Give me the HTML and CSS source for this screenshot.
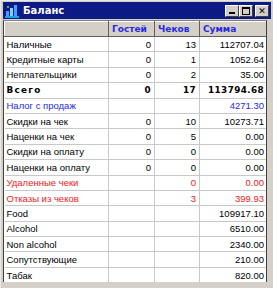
FILE: index.html
```html
<!DOCTYPE html>
<html lang="ru">
<head>
  <meta charset="UTF-8">
  <title>Баланс</title>
  <link rel="stylesheet" href="styles.css">
</head>
<body>
  <div class="window">
    <div class="titlebar">
      <svg class="app-icon" width="14" height="14" viewBox="0 0 14 14">
        <rect x="0" y="0" width="14" height="14" fill="#0c1a86"/>
        <rect x="1" y="7" width="3" height="6" fill="#3fa0ff"/>
        <rect x="5" y="4" width="3" height="9" fill="#7fd0ff"/>
        <rect x="9" y="1" width="3" height="12" fill="#3fa0ff"/>
        <rect x="2" y="2" width="2" height="2" fill="#40c040"/>
        <rect x="0" y="12" width="14" height="2" fill="#20a0e0"/>
      </svg>
      <span class="title">Баланс</span>
      <div class="buttons">
        <span class="btn"><i class="min"></i></span>
        <span class="btn"><i class="max"></i></span>
        <span class="btn close">&#x2715;</span>
      </div>
    </div>
    <div class="grid-frame">
      <table class="grid">
        <colgroup>
          <col class="c-name"><col class="c-guests"><col class="c-checks"><col class="c-sum">
        </colgroup>
        <thead>
          <tr><th></th><th>Гостей</th><th>Чеков</th><th>Сумма</th></tr>
        </thead>
        <tbody>
          <tr><td>Наличные</td><td>0</td><td>13</td><td>112707.04</td></tr>
          <tr><td>Кредитные карты</td><td>0</td><td>1</td><td>1052.64</td></tr>
          <tr><td>Неплательщики</td><td>0</td><td>2</td><td>35.00</td></tr>
          <tr class="total"><td>Всего</td><td>0</td><td>17</td><td>113794.68</td></tr>
          <tr class="blue"><td>Налог с продаж</td><td></td><td></td><td>4271.30</td></tr>
          <tr><td>Скидки на чек</td><td>0</td><td>10</td><td>10273.71</td></tr>
          <tr><td>Наценки на чек</td><td>0</td><td>5</td><td>0.00</td></tr>
          <tr><td>Скидки на оплату</td><td>0</td><td>0</td><td>0.00</td></tr>
          <tr><td>Наценки на оплату</td><td>0</td><td>0</td><td>0.00</td></tr>
          <tr class="red"><td>Удаленные чеки</td><td></td><td>0</td><td>0.00</td></tr>
          <tr class="red"><td>Отказы из чеков</td><td></td><td>3</td><td>399.93</td></tr>
          <tr><td>Food</td><td></td><td></td><td>109917.10</td></tr>
          <tr><td>Alcohol</td><td></td><td></td><td>6510.00</td></tr>
          <tr><td>Non alcohol</td><td></td><td></td><td>2340.00</td></tr>
          <tr><td>Сопутствующие</td><td></td><td></td><td>210.00</td></tr>
          <tr><td>Табак</td><td></td><td></td><td>820.00</td></tr>
        </tbody>
      </table>
    </div>
  </div>
</body>
</html>
```

FILE: styles.css
```css
body {
  margin: 0;
  font-family: "Liberation Sans", Arial, sans-serif;
}
.window {
  width: 273px;
  height: 288px;
  box-sizing: border-box;
  padding: 1px 2px 0 2px;
  background-color: #d4d0c8;
  border-top: 1px solid #e8e8e8;
  border-left: 1px solid #e8e8e8;
  display: flex;
  flex-direction: column;
}
.titlebar {
  height: 17px;
  flex: none;
  display: flex;
  align-items: center;
  padding: 0 2px 0 2px;
  background-color: #0c1a86;
  color: #fff;
}
.app-icon {
  margin-right: 4px;
}
.title {
  font-family: "DejaVu Sans", sans-serif;
  font-weight: bold;
  font-size: 10px;
}
.buttons {
  margin-left: auto;
  display: flex;
}
.btn {
  width: 14px;
  height: 12px;
  box-sizing: border-box;
  background-color: #d4d0c8;
  border-top: 1px solid #fff;
  border-left: 1px solid #fff;
  border-right: 1px solid #404040;
  border-bottom: 1px solid #404040;
  display: flex;
  align-items: center;
  justify-content: center;
  position: relative;
}
.btn.close {
  margin-left: 2px;
  color: #000;
  font-size: 9px;
  font-weight: bold;
  font-family: "DejaVu Sans", sans-serif;
}
.btn .min {
  position: absolute;
  left: 3px;
  bottom: 2px;
  width: 6px;
  height: 2px;
  background-color: #000;
}
.btn .max {
  width: 6px;
  height: 5px;
  border: 1px solid #000;
  border-top-width: 2px;
}
.grid-frame {
  flex: 1;
  margin-top: 1px;
  background-color: #fff;
  border-top: 1px solid #808080;
  border-left: 1px solid #404040;
  border-right: 1px solid #404040;
  margin-right: 4px;
  margin-bottom: 6px;
  overflow: hidden;
}
.grid {
  border-collapse: collapse;
  table-layout: fixed;
  width: 263px;
  font-size: 9.5px;
}
.c-name { width: 104px; }
.c-guests { width: 46px; }
.c-checks { width: 45px; }
.c-sum { width: 68px; }
.grid th {
  height: 15px;
  box-sizing: border-box;
  padding: 0 0 0 3px;
  text-align: left;
  background-color: #d4d0c8;
  color: #2828e0;
  font-family: "DejaVu Sans", sans-serif;
  font-size: 9px;
  font-weight: bold;
  border-top: 1px solid #fff;
  border-left: 1px solid #fff;
  border-right: 1px solid #606060;
  border-bottom: 1px solid #606060;
}
.grid td {
  height: 15.4px;
  box-sizing: border-box;
  padding: 0 3px 0 2px;
  border: 1px solid #c8c8c8;
  text-align: right;
  white-space: nowrap;
  color: #000;
}
.grid td:first-child {
  text-align: left;
  border-left: none;
}
.total td {
  font-family: "DejaVu Sans", sans-serif;
  font-weight: bold;
  font-size: 8.8px;
  letter-spacing: 0.4px;
}
.total td:first-child {
  letter-spacing: 1.3px;
}
.blue td {
  color: #2a2ae6;
}
.red td {
  color: #f02020;
}
```
